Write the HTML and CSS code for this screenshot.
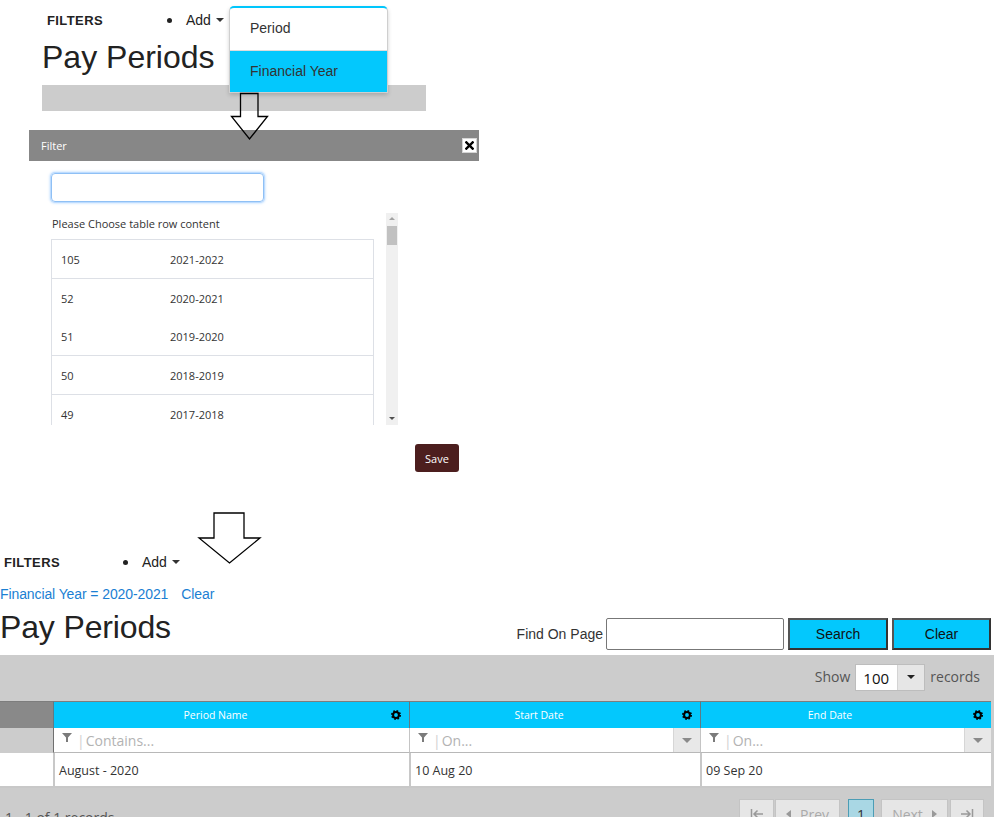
FILE: index.html
```html
<!DOCTYPE html>
<html>
<head>
<meta charset="utf-8">
<title>Pay Periods</title>
<link rel="stylesheet" href="styles.css">
</head>
<body>
<div class="page">

  <section class="step step-one">
    <div class="filters-bar fb-one">
      <span class="filters-label">FILTERS</span>
      <span class="bullet"></span>
      <span class="add">Add <span class="caret"></span></span>
      <div class="dropdown">
        <div class="dd-item">Period</div>
        <div class="dd-item active">Financial Year</div>
      </div>
    </div>
    <h1 class="title title-one">Pay Periods</h1>
    <div class="greybar"></div>
  </section>

  <section class="dialog">
    <div class="dlg-head">
      <span class="dlg-title">Filter</span>
      <span class="dlg-close"><svg viewBox="0 0 10 10" width="9" height="9"><path d="M1.5 1.5 L8.5 8.5 M8.5 1.5 L1.5 8.5" stroke="#000" stroke-width="2.6" stroke-linecap="square"/></svg></span>
    </div>
    <div class="dlg-body">
      <div class="dlg-input"></div>
      <div class="list-wrap">
        <div class="list-content">
          <div class="caption">Please Choose table row content</div>
          <div class="choice-table">
            <div class="choice-row bordered"><span class="c1">105</span><span class="c2">2021-2022</span></div>
            <div class="choice-row"><span class="c1">52</span><span class="c2">2020-2021</span></div>
            <div class="choice-row bordered"><span class="c1">51</span><span class="c2">2019-2020</span></div>
            <div class="choice-row bordered"><span class="c1">50</span><span class="c2">2018-2019</span></div>
            <div class="choice-row bordered"><span class="c1">49</span><span class="c2">2017-2018</span></div>
          </div>
        </div>
        <div class="scrollbar">
          <span class="sb-up"></span>
          <span class="sb-thumb"></span>
          <span class="sb-down"></span>
        </div>
      </div>
      <div class="dlg-foot"><button class="save">Save</button></div>
    </div>
  </section>

  <section class="step step-three">
    <div class="filters-bar fb-two">
      <span class="filters-label">FILTERS</span>
      <span class="bullet"></span>
      <span class="add">Add <span class="caret"></span></span>
    </div>
    <div class="active-filter">
      <span class="link">Financial Year = 2020-2021</span><span class="link clear-link">Clear</span>
    </div>
    <div class="title-row">
      <h1 class="title">Pay Periods</h1>
      <div class="find">
        <span class="find-label">Find On Page</span>
        <span class="find-input"></span>
        <button class="cyan-btn search-btn">Search</button>
        <button class="cyan-btn clear-btn">Clear</button>
      </div>
    </div>

    <div class="grid-band">
      <div class="toolbar">
        <span class="tb-text">Show</span>
        <span class="select"><span class="sel-val">100</span><span class="sel-btn"><span class="dark-caret"></span></span></span>
        <span class="tb-text">records</span>
      </div>

      <div class="grid">
        <div class="hcell lead"></div>
        <div class="hcell"><span class="htext">Period Name</span><svg class="gear" viewBox="0 0 10 10" width="10" height="10"><circle cx="5" cy="5" r="2.9" fill="none" stroke="#000" stroke-width="2"/><circle cx="5" cy="5" r="4.1" fill="none" stroke="#000" stroke-width="1.8" stroke-dasharray="1.6 1.62"/></svg></div>
        <div class="hcell"><span class="htext">Start Date</span><svg class="gear" viewBox="0 0 10 10" width="10" height="10"><circle cx="5" cy="5" r="2.9" fill="none" stroke="#000" stroke-width="2"/><circle cx="5" cy="5" r="4.1" fill="none" stroke="#000" stroke-width="1.8" stroke-dasharray="1.6 1.62"/></svg></div>
        <div class="hcell"><span class="htext">End Date</span><svg class="gear" viewBox="0 0 10 10" width="10" height="10"><circle cx="5" cy="5" r="2.9" fill="none" stroke="#000" stroke-width="2"/><circle cx="5" cy="5" r="4.1" fill="none" stroke="#000" stroke-width="1.8" stroke-dasharray="1.6 1.62"/></svg></div>

        <div class="fcell lead"></div>
        <div class="fcell"><svg class="funnel" viewBox="0 0 10 9" width="10" height="9"><path d="M0 0 H10 L6 4.5 V9 H4 V4.5 Z" fill="#7b7b7b"/></svg><span class="pipe">|</span><span class="ph">Contains...</span></div>
        <div class="fcell"><svg class="funnel" viewBox="0 0 10 9" width="10" height="9"><path d="M0 0 H10 L6 4.5 V9 H4 V4.5 Z" fill="#7b7b7b"/></svg><span class="pipe">|</span><span class="ph">On...</span><span class="fbtn"><span class="grey-caret"></span></span></div>
        <div class="fcell"><svg class="funnel" viewBox="0 0 10 9" width="10" height="9"><path d="M0 0 H10 L6 4.5 V9 H4 V4.5 Z" fill="#7b7b7b"/></svg><span class="pipe">|</span><span class="ph">On...</span><span class="fbtn"><span class="grey-caret"></span></span></div>

        <div class="dcell lead"></div>
        <div class="dcell">August - 2020</div>
        <div class="dcell">10 Aug 20</div>
        <div class="dcell">09 Sep 20</div>
      </div>

      <div class="grid-foot">
        <span class="count">1 - 1 of 1 records</span>
        <div class="pager">
          <span class="pbtn first"><svg viewBox="0 0 14 10" width="14" height="10"><path d="M1.5 0 V10 M13 5 H4 M7.5 1.5 L4 5 L7.5 8.5" fill="none" stroke="#999" stroke-width="1.5"/></svg></span>
          <span class="pbtn prev"><span class="tri-l"></span>Prev</span>
          <span class="pbtn current">1</span>
          <span class="pbtn next">Next<span class="tri-r"></span></span>
          <span class="pbtn last"><svg viewBox="0 0 14 10" width="14" height="10"><path d="M12.5 0 V10 M1 5 H10 M6.5 1.5 L10 5 L6.5 8.5" fill="none" stroke="#999" stroke-width="1.5"/></svg></span>
        </div>
      </div>
    </div>
  </section>

  <svg class="arrow arrow-one" viewBox="0 0 40 50" width="40" height="50"><polygon points="10.5,1.5 28,1.5 28,24.5 37.5,24.5 19.5,47 1.5,24.5 10.5,24.5" fill="none" stroke="#000" stroke-width="1.3"/></svg>
  <svg class="arrow arrow-two" viewBox="0 0 66 55" width="66" height="55"><polygon points="17,2 47,2 47,27 63,27 32.5,52 2,27 17,27" fill="none" stroke="#000" stroke-width="1.3"/></svg>
</div>
</body>
</html>
```

FILE: styles.css
```css
html, body {
  margin: 0;
  padding: 0;
  background: #fff;
}
.page {
  position: relative;
  width: 994px;
  height: 828px;
  overflow: hidden;
  font-family: "Liberation Sans", Arial, sans-serif;
  color: #333;
}

/* filters bar */
.filters-bar {
  position: relative;
  display: flex;
  align-items: center;
  height: 40px;
}
.fb-one { padding-left: 47px; }
.fb-two { padding-left: 4px; }
.filters-label {
  width: 120px;
  font-weight: bold;
  font-size: 13px;
  letter-spacing: 0.4px;
  color: #222;
}
.fb-two .filters-label { width: 119px; }
.bullet {
  width: 5px;
  height: 5px;
  border-radius: 50%;
  background: #222;
  margin-right: 14px;
}
.add {
  display: flex;
  align-items: center;
  font-size: 14px;
  color: #222;
}
.caret {
  margin-left: 5px;
  width: 0;
  height: 0;
  border-left: 4px solid transparent;
  border-right: 4px solid transparent;
  border-top: 4px solid #333;
}

.dropdown {
  position: absolute;
  left: 229px;
  top: 6px;
  width: 157px;
  background: #fff;
  border: 1px solid #cfcfcf;
  border-top: 2px solid #00c6fc;
  border-radius: 5px 5px 0 0;
  box-shadow: 0 2px 4px rgba(0, 0, 0, 0.18);
  z-index: 2;
}
.dd-item {
  height: 42px;
  line-height: 40px;
  padding-left: 20px;
  font-size: 14px;
  color: #333;
  border-bottom: 1px solid #dcdcdc;
}
.dd-item.active {
  height: 41px;
  line-height: 41px;
  background: #03c8fd;
  border-bottom: 0;
}

.title {
  margin: 0;
  font-weight: normal;
  font-size: 32px;
  line-height: 34px;
  height: 34px;
  color: #222;
}
.title-one { padding-left: 42px; }
.greybar {
  margin: 11px 0 0 42px;
  width: 384px;
  height: 26px;
  background: #cccccc;
}

/* dialog */
.dialog {
  margin: 19px 0 0 29px;
  width: 450px;
  font-family: "Open Sans", "Noto Sans", sans-serif;
}
.dlg-head {
  display: flex;
  align-items: center;
  justify-content: space-between;
  height: 31px;
  background: #878787;
  padding: 0 2px 0 12px;
}
.dlg-title {
  color: #fff;
  font-size: 11px;
}
.dlg-close {
  display: flex;
  align-items: center;
  justify-content: center;
  width: 13px;
  height: 13px;
  background: #fff;
  border: 1px solid #d6d6d6;
}
.dlg-body {
  padding-left: 22px;
}
.dlg-input {
  margin-top: 12px;
  width: 211px;
  height: 27px;
  border: 1px solid #8fc0f5;
  border-radius: 4px;
  box-shadow: 0 0 0 1px #bddcff, 0 0 2px 2px rgba(150, 200, 255, 0.35);
}
.list-wrap {
  display: flex;
  margin-top: 11px;
  height: 212px;
  width: 347px;
}
.list-content {
  width: 335px;
  overflow: hidden;
}
.caption {
  height: 26px;
  line-height: 22px;
  padding-left: 1px;
  font-size: 11px;
  color: #333;
}
.choice-table {
  width: 321px;
  border: 1px solid #dde0e6;
  border-bottom: 0;
}
.choice-row {
  display: flex;
  align-items: center;
  height: 38px;
  font-size: 11px;
  color: #333;
}
.choice-row.bordered {
  border-bottom: 1px solid #dde0e6;
}
.c1 {
  width: 109px;
  padding-left: 9px;
}
.scrollbar {
  position: relative;
  width: 12px;
  background: #f0f0f0;
}
.sb-up {
  position: absolute;
  left: 3px;
  top: 4px;
  border-left: 3px solid transparent;
  border-right: 3px solid transparent;
  border-bottom: 3px solid #a3a3a3;
}
.sb-thumb {
  position: absolute;
  left: 1px;
  top: 13px;
  width: 10px;
  height: 19px;
  background: #c1c1c1;
}
.sb-down {
  position: absolute;
  left: 3px;
  bottom: 5px;
  border-left: 3px solid transparent;
  border-right: 3px solid transparent;
  border-top: 3px solid #505050;
}
.dlg-foot {
  display: flex;
  justify-content: flex-end;
  padding-right: 20px;
  margin-top: 19px;
}
.save {
  width: 44px;
  height: 28px;
  border: 0;
  border-radius: 3px;
  background: #4c1e1e;
  color: #fff;
  font-family: "Open Sans", "Noto Sans", sans-serif;
  font-size: 11px;
  padding: 0;
}

/* step three */
.step-three {
  margin-top: 70px;
}
.active-filter {
  margin-top: 2px;
  height: 20px;
  line-height: 20px;
  font-size: 14px;
  letter-spacing: -0.1px;
}
.link { color: #1b7fd3; }
.clear-link { margin-left: 13px; }
.title-row {
  display: flex;
  margin-top: 6px;
  height: 45px;
}
.title-row .title { letter-spacing: -0.15px; }
.find {
  display: flex;
  align-items: center;
  margin-left: auto;
  margin-top: 8px;
  height: 32px;
  padding-right: 3px;
}
.find-label {
  font-size: 14px;
  color: #333;
  margin-right: 3px;
}
.find-input {
  width: 176px;
  height: 30px;
  border: 1px solid #777;
  border-radius: 2px;
  background: #fff;
}
.cyan-btn {
  margin-left: 4px;
  height: 32px;
  background: #03c8fd;
  border: 2px solid #4a4a4a;
  border-color: #555 #333 #333 #555;
  font-family: "Liberation Sans", Arial, sans-serif;
  font-size: 14px;
  color: #111;
  padding: 0;
}
.search-btn { width: 100px; }
.clear-btn { width: 99px; }

.grid-band {
  height: 162px;
  overflow: hidden;
  background: #cccccc;
  font-family: "Open Sans", "Noto Sans", sans-serif;
}
.toolbar {
  display: flex;
  align-items: center;
  justify-content: flex-end;
  height: 44px;
  margin-bottom: 2px;
  padding-right: 14px;
}
.tb-text {
  font-size: 14px;
  color: #555;
  margin-top: -2px;
}
.select {
  display: flex;
  margin: 0 5px;
  height: 25px;
  width: 68px;
  border: 1px solid #bdbdbd;
  background: #fff;
}
.sel-val {
  width: 41px;
  padding-left: 7px;
  box-sizing: border-box;
  line-height: 26px;
  font-size: 15px;
  color: #111;
}
.sel-btn {
  flex: 1;
  display: flex;
  align-items: center;
  justify-content: center;
  background: #e6e6e6;
  border-left: 1px solid #d4d4d4;
}
.dark-caret {
  border-left: 4px solid transparent;
  border-right: 4px solid transparent;
  border-top: 4px solid #222;
}

.grid {
  display: grid;
  grid-template-columns: 53px 356px 291px 291px;
  grid-template-rows: 27px 25px 35px;
  width: 991px;
}
.hcell {
  position: relative;
  display: flex;
  align-items: center;
  justify-content: center;
  padding-right: 32px;
  background: #03c8fd;
  border-top: 1px solid #7d7d7d;
  border-left: 1px solid #5f7a84;
  color: #fff;
  font-size: 10.5px;
}
.hcell.lead {
  background: #898989;
  border-left: 0;
  padding-right: 0;
}
.gear {
  position: absolute;
  right: 8px;
  top: 8px;
}
.fcell {
  position: relative;
  display: flex;
  align-items: center;
  background: #fff;
  border-left: 1px solid #c4c4c4;
  border-bottom: 1px solid #b8b8b8;
  padding-left: 8px;
  font-size: 14px;
}
.fcell:nth-child(6) { border-left: 1px solid #6f6f6f; }
.fcell.lead {
  background: #cccccc;
  border-left: 0;
  border-bottom: 0;
  padding-left: 0;
}
.funnel {
  margin-top: -5px;
}
.pipe {
  color: #cfcfcf;
  margin: 0 1px 0 5px;
}
.ph {
  color: #b3b3b3;
}
.fbtn {
  position: absolute;
  right: 0;
  top: 0;
  bottom: 0;
  width: 26px;
  display: flex;
  align-items: center;
  justify-content: center;
  background: #e8e8e8;
  border-left: 1px solid #d6d6d6;
}
.grey-caret {
  border-left: 5px solid transparent;
  border-right: 5px solid transparent;
  border-top: 5px solid #8a8a8a;
}
.dcell {
  display: flex;
  align-items: center;
  background: #fff;
  border-left: 2px solid #c8c8c8;
  border-bottom: 2px solid #c8c8c8;
  padding-left: 4px;
  padding-top: 2px;
  font-size: 12.5px;
  color: #333;
}
.dcell.lead {
  border-left: 0;
  padding-left: 0;
}

.grid-foot {
  display: flex;
  align-items: flex-start;
  padding-top: 11px;
}
.count {
  padding-left: 5px;
  padding-top: 9px;
  font-size: 14px;
  color: #555;
}
.pager {
  display: flex;
  margin-left: auto;
  margin-right: 10px;
}
.pbtn {
  display: flex;
  align-items: center;
  justify-content: center;
  height: 30px;
  box-sizing: border-box;
  background: #e6e6e6;
  border: 1px solid #c4c4c4;
  color: #aaa;
  font-size: 14px;
}
.first { width: 35px; }
.prev { width: 65px; margin-left: 1px; }
.current {
  width: 26px;
  margin-left: 8px;
  background: #a9d7e4;
  border-color: #4c9db5;
  color: #333;
}
.next { width: 67px; margin-left: 7px; }
.last { width: 34px; margin-left: 2px; }
.tri-l {
  margin-right: 9px;
  border-top: 4px solid transparent;
  border-bottom: 4px solid transparent;
  border-right: 5px solid #999;
}
.tri-r {
  margin-left: 9px;
  border-top: 4px solid transparent;
  border-bottom: 4px solid transparent;
  border-left: 5px solid #999;
}

/* annotation arrows */
.arrow {
  position: absolute;
  z-index: 3;
}
.arrow-one { left: 230px; top: 92px; }
.arrow-two { left: 197px; top: 511px; }
```
